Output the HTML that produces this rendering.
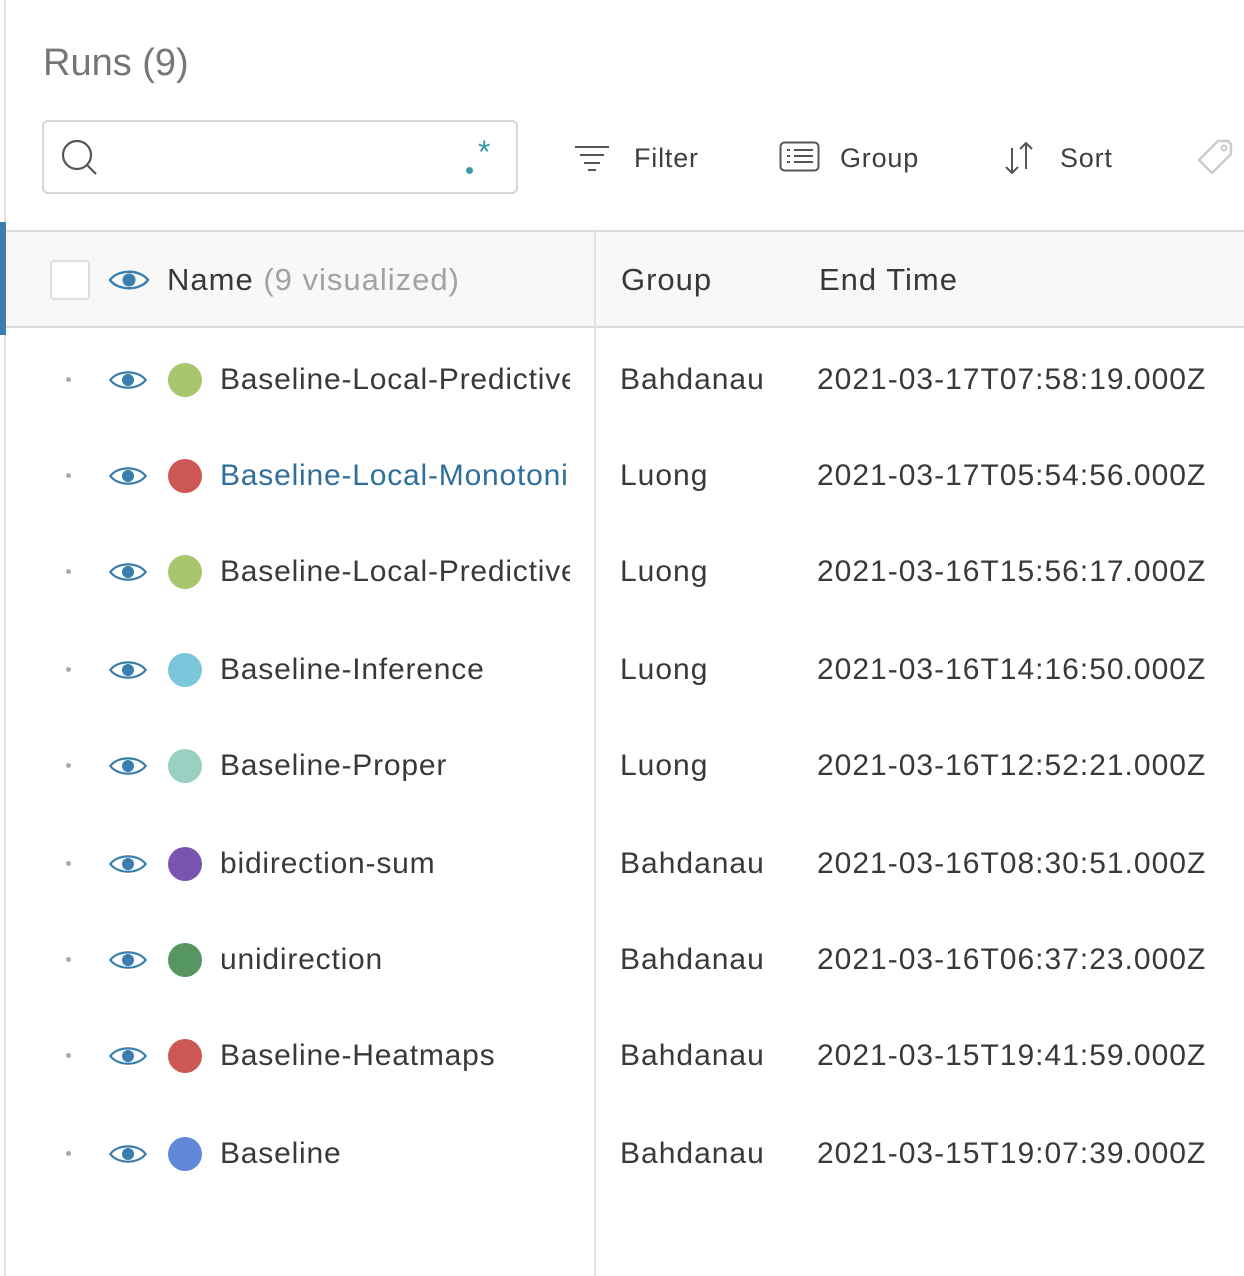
<!DOCTYPE html>
<html><head><meta charset="utf-8"><style>
*{margin:0;padding:0;box-sizing:border-box}
body{width:1244px;height:1276px;background:#fff;font-family:"Liberation Sans",sans-serif;color:#363a3d;position:relative;overflow:hidden}
.a{position:absolute}
.row{position:absolute;left:6px;right:0;height:96px}
.row .dot{position:absolute;left:60px;top:45px;width:5px;height:5px;border-radius:50%;background:#aaa}
.row .eye{position:absolute;left:102px;top:35px}
.row .c{position:absolute;left:162px;top:31px;width:34px;height:34px;border-radius:50%}
.row .n{position:absolute;left:214px;top:0;width:350px;overflow:hidden;white-space:nowrap;line-height:96px;font-size:30px;letter-spacing:0.8px}
.row .g{position:absolute;left:614px;line-height:96px;font-size:30px;letter-spacing:1px}
.row .t{position:absolute;left:811px;line-height:96px;font-size:30px;letter-spacing:1px}
.tb{position:absolute;top:143px;font-size:27px;letter-spacing:0.8px;color:#3d4043}
</style></head><body>
<div class="a" style="left:4px;top:0;width:2px;height:1276px;background:#e0e0e0"></div>
<div class="a" style="left:43px;top:42px;font-size:38px;color:#74777a">Runs (9)</div>
<div class="a" style="left:42px;top:120px;width:476px;height:74px;border:2px solid #d6d6d6;border-radius:6px"></div>
<svg class="a" style="left:58px;top:136px" width="42" height="42" viewBox="0 0 42 42"><circle cx="19" cy="19" r="14" fill="none" stroke="#555" stroke-width="2.2"/><path d="M29 29l9 9" stroke="#555" stroke-width="2.2"/></svg>
<div class="a" style="left:466px;top:167px;width:7px;height:7px;border-radius:50%;background:#3a9aa8"></div>
<div class="a" style="left:478px;top:134px;font-size:32px;color:#3a9aa8">*</div>
<svg class="a" style="left:574px;top:145px" width="38" height="26" viewBox="0 0 38 26"><path d="M1 2h34M6 10h24M10 18h16M14 25h8" stroke="#555" stroke-width="2"/></svg>
<div class="tb" style="left:634px">Filter</div>
<svg class="a" style="left:779px;top:141px" width="42" height="32" viewBox="0 0 42 32"><rect x="1.5" y="1.5" width="38" height="28" rx="4" fill="none" stroke="#555" stroke-width="2"/><path d="M8 9h3M15 9h19M8 15h3M15 15h19M8 21h3M15 21h19" stroke="#555" stroke-width="2"/></svg>
<div class="tb" style="left:840px">Group</div>
<svg class="a" style="left:1002px;top:140px" width="34" height="36" viewBox="0 0 34 36"><path d="M10 8v25M4 27l6 6 6-6M24 29V3M18 9l6-6 6 6" fill="none" stroke="#555" stroke-width="2"/></svg>
<div class="tb" style="left:1060px">Sort</div>
<svg class="a" style="left:1196px;top:138px" width="40" height="38" viewBox="0 0 40 38"><path d="M3 22L22 3h10l3 3v10L16 35z" fill="none" stroke="#ccc" stroke-width="2.5" stroke-linejoin="round"/><circle cx="28" cy="10" r="2.5" fill="none" stroke="#ccc" stroke-width="2"/></svg>
<div class="a" style="left:6px;top:230px;width:1238px;height:98px;background:#f8f8f8;border-top:2px solid #dcdcdc;border-bottom:2px solid #dcdcdc"></div>
<div class="a" style="left:0;top:222px;width:6px;height:113px;background:#3a7dae"></div>
<div class="a" style="left:594px;top:230px;width:2px;height:1046px;background:#e2e2e2"></div>
<div class="a" style="left:50px;top:260px;width:40px;height:40px;background:#fff;border:2px solid #dedede;border-radius:4px"></div>
<svg class="a" style="left:108px;top:266px" width="42" height="28" viewBox="0 0 42 28"><path d="M2 14C10 3 32 3 40 14C32 25 10 25 2 14z" fill="none" stroke="#3a7dae" stroke-width="2.4"/><circle cx="21" cy="14" r="6.5" fill="#3a7dae"/></svg>
<div class="a" style="left:167px;top:262px;font-size:31px;letter-spacing:1px;color:#363a3d">Name <span style="color:#a0a3a6">(9 visualized)</span></div>
<div class="a" style="left:621px;top:262px;font-size:31px;letter-spacing:1px">Group</div>
<div class="a" style="left:819px;top:262px;font-size:31px;letter-spacing:1px">End Time</div>

<div class="row" style="top:332px"><div class="dot"></div><svg class="eye" width="40" height="26" viewBox="0 0 42 28"><path d="M2 14C10 3 32 3 40 14C32 25 10 25 2 14z" fill="none" stroke="#3a7dae" stroke-width="2.4"/><circle cx="21" cy="14" r="6.5" fill="#3a7dae"/></svg><div class="c" style="background:#a8c66c"></div><div class="n">Baseline-Local-Predictive</div><div class="g">Bahdanau</div><div class="t">2021-03-17T07:58:19.000Z</div></div>
<div class="row" style="top:428px"><div class="dot"></div><svg class="eye" width="40" height="26" viewBox="0 0 42 28"><path d="M2 14C10 3 32 3 40 14C32 25 10 25 2 14z" fill="none" stroke="#3a7dae" stroke-width="2.4"/><circle cx="21" cy="14" r="6.5" fill="#3a7dae"/></svg><div class="c" style="background:#cd5752"></div><div class="n" style="color:#2f6f9c">Baseline-Local-Monotonic</div><div class="g">Luong</div><div class="t">2021-03-17T05:54:56.000Z</div></div>
<div class="row" style="top:524px"><div class="dot"></div><svg class="eye" width="40" height="26" viewBox="0 0 42 28"><path d="M2 14C10 3 32 3 40 14C32 25 10 25 2 14z" fill="none" stroke="#3a7dae" stroke-width="2.4"/><circle cx="21" cy="14" r="6.5" fill="#3a7dae"/></svg><div class="c" style="background:#a8c66c"></div><div class="n">Baseline-Local-Predictive</div><div class="g">Luong</div><div class="t">2021-03-16T15:56:17.000Z</div></div>
<div class="row" style="top:622px"><div class="dot"></div><svg class="eye" width="40" height="26" viewBox="0 0 42 28"><path d="M2 14C10 3 32 3 40 14C32 25 10 25 2 14z" fill="none" stroke="#3a7dae" stroke-width="2.4"/><circle cx="21" cy="14" r="6.5" fill="#3a7dae"/></svg><div class="c" style="background:#7cc6dc"></div><div class="n">Baseline-Inference</div><div class="g">Luong</div><div class="t">2021-03-16T14:16:50.000Z</div></div>
<div class="row" style="top:718px"><div class="dot"></div><svg class="eye" width="40" height="26" viewBox="0 0 42 28"><path d="M2 14C10 3 32 3 40 14C32 25 10 25 2 14z" fill="none" stroke="#3a7dae" stroke-width="2.4"/><circle cx="21" cy="14" r="6.5" fill="#3a7dae"/></svg><div class="c" style="background:#99d0c2"></div><div class="n">Baseline-Proper</div><div class="g">Luong</div><div class="t">2021-03-16T12:52:21.000Z</div></div>
<div class="row" style="top:816px"><div class="dot"></div><svg class="eye" width="40" height="26" viewBox="0 0 42 28"><path d="M2 14C10 3 32 3 40 14C32 25 10 25 2 14z" fill="none" stroke="#3a7dae" stroke-width="2.4"/><circle cx="21" cy="14" r="6.5" fill="#3a7dae"/></svg><div class="c" style="background:#7a55b0"></div><div class="n">bidirection-sum</div><div class="g">Bahdanau</div><div class="t">2021-03-16T08:30:51.000Z</div></div>
<div class="row" style="top:912px"><div class="dot"></div><svg class="eye" width="40" height="26" viewBox="0 0 42 28"><path d="M2 14C10 3 32 3 40 14C32 25 10 25 2 14z" fill="none" stroke="#3a7dae" stroke-width="2.4"/><circle cx="21" cy="14" r="6.5" fill="#3a7dae"/></svg><div class="c" style="background:#559663"></div><div class="n">unidirection</div><div class="g">Bahdanau</div><div class="t">2021-03-16T06:37:23.000Z</div></div>
<div class="row" style="top:1008px"><div class="dot"></div><svg class="eye" width="40" height="26" viewBox="0 0 42 28"><path d="M2 14C10 3 32 3 40 14C32 25 10 25 2 14z" fill="none" stroke="#3a7dae" stroke-width="2.4"/><circle cx="21" cy="14" r="6.5" fill="#3a7dae"/></svg><div class="c" style="background:#cd5752"></div><div class="n">Baseline-Heatmaps</div><div class="g">Bahdanau</div><div class="t">2021-03-15T19:41:59.000Z</div></div>
<div class="row" style="top:1106px"><div class="dot"></div><svg class="eye" width="40" height="26" viewBox="0 0 42 28"><path d="M2 14C10 3 32 3 40 14C32 25 10 25 2 14z" fill="none" stroke="#3a7dae" stroke-width="2.4"/><circle cx="21" cy="14" r="6.5" fill="#3a7dae"/></svg><div class="c" style="background:#6188d9"></div><div class="n">Baseline</div><div class="g">Bahdanau</div><div class="t">2021-03-15T19:07:39.000Z</div></div>
</body></html>
